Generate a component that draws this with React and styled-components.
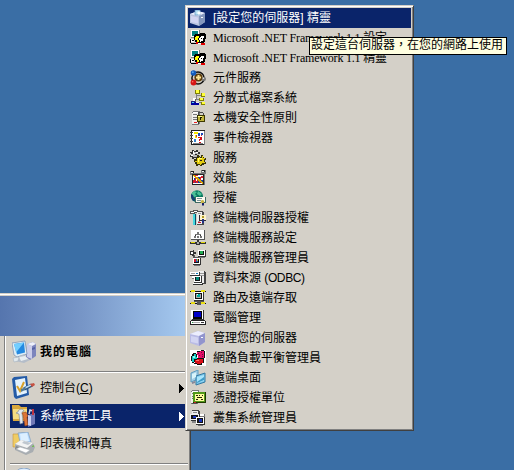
import React from "react";
import styled, { createGlobalStyle, css } from "styled-components";

const GlobalStyle = createGlobalStyle`
  * { box-sizing: border-box; }
  html, body { margin: 0; background: #3a6ea5; overflow: hidden; }
`;

const Desktop = styled.main`
  position: relative;
  width: 514px;
  height: 470px;
  overflow: hidden;
  background: #3a6ea5;
  color: #000;
  cursor: default;
  font: 12px/20px "Liberation Sans", "Noto Sans CJK TC", sans-serif;
`;

const StartMenu = styled.section`
  position: absolute;
  left: -4px;
  top: 293px;
  width: 195px;
  height: 190px;
  background: #d4d0c8;
  border: 1px solid #404040;
  border-top-color: #d4d0c8;
  box-shadow: inset -1px 0 #808080, inset 0 1px #fff;
`;

const UserBanner = styled.header`
  height: 40px;
  margin: 2px 2px 0 0;
  background: linear-gradient(90deg, #5474ad, #7796c7 45%, #a6caf0);
`;

const StartList = styled.div`
  margin-left: 7px;
  padding: 0 2px 0 5px;
  height: 146px;
  border-left: 1px solid #808080;
  box-shadow: inset 1px 0 #fff;
`;

const StartItem = styled.div`
  display: flex;
  align-items: center;
  height: ${(p) => p.$height || 28}px;
  padding: 0 4px 0 2px;
  ${(p) => p.$active && css`
    height: 24px;
    margin: 2px 0;
    background: #0a246a;
    color: #fff;
  `}
  svg { flex: none; }
`;

const StartLabel = styled.span`
  flex: 1;
  margin-left: 4px;
  white-space: pre;
  font-weight: ${(p) => (p.$bold ? 700 : 400)};
  letter-spacing: ${(p) => (p.$bold ? "1px" : "normal")};
`;

const Divider = styled.hr`
  height: 2px;
  margin: ${(p) => p.$margin};
  border: 0;
  border-top: 1px solid #808080;
  border-bottom: 1px solid #fff;
`;

const Popup = styled.nav`
  position: absolute;
  left: 185px;
  top: 5px;
  width: 229px;
  height: 426px;
  padding: 1px;
  background: #d4d0c8;
  border: 1px solid;
  border-color: #d4d0c8 #404040 #404040 #d4d0c8;
  box-shadow: inset 1px 1px #fff, inset -1px -1px #808080;
`;

const MenuItem = styled.div`
  display: flex;
  align-items: center;
  height: 20px;
  margin: 0 1px;
  padding-left: 2px;
  &:first-child { margin-top: 1px; }
  ${(p) => p.$active && css`
    background: #0a246a;
    color: #fff;
  `}
  svg { flex: none; }
`;

const MenuLabel = styled.span`
  margin-left: 7px;
  white-space: pre;
  ${(p) => p.$serif && css`
    font-family: "Liberation Serif", "Noto Sans CJK TC", serif;
    letter-spacing: -0.19px;
  `}
`;

const Latin = styled.span`
  letter-spacing: -0.4px;
`;

const Tooltip = styled.div`
  position: absolute;
  left: 309px;
  top: 37px;
  width: 198px;
  height: 18px;
  padding-left: 1px;
  border: 1px solid #000;
  background: #ffffe1;
  line-height: 15px;
  white-space: nowrap;
`;

const Glyph = ({ children }) => (
  <svg width="16" height="16" viewBox="0 0 16 16" shapeRendering="crispEdges">{children}</svg>
);

const ServerIcon = ({ wizard }) => (
  <svg width="16" height="16" viewBox="0 0 16 16">
    <path d="M0 4 8 1l7 2v9l-6 4-9-3Z" fill={wizard ? "#bac4df" : "#b9bbe5"} />
    <path d="M0 4 8 1l7 2-6 3Z" fill="#eceefe" />
    <path d="m9 6 6-3v9l-6 4Z" fill={wizard ? "#8497bd" : "#9295cd"} />
    <path d="M1 6 8 7.5v6L1 12Z" fill="#d2d4f2" />
    <path d="M11 7h2v1h-2Z" fill="#f8fbff" />
    {wizard && <path d="M5 0h5v5H5Z" fill="#b9e2f3" stroke="#679bc7" strokeWidth=".8" />}
    {wizard && <path d="m7 3 2-2 2 2-2 2Z" fill="#f9ffff" />}
  </svg>
);

const DotNetIcon = () => (
  <Glyph>
    <path d="M1 0h9v8H1Z" fill="#808080" />
    <path d="M1 0h8v7H1Z" fill="#fff" />
    <path d="M2 1h6v5H2Z" fill="#008080" />
    <path d="M5 4h5V3h5v1h1v5h-1v3h-1v1H7v-1H5v-2H4V5h1Z" fill="#000" />
    <path d="M6 6h3v2H8v2h1v2H7v-2H5V7h1Z" fill="#ffff00" />
    <path d="M10 7h1V6h3v3h-1v3h-3v-2H9V8h1Z" fill="#fff" />
    <path d="M11 8h1v1h-1Zm2 0h1v1h-1Zm-2 3h2v1h-2Z" fill="#000" />
    <path d="M1 9h3v3H1Z" fill="#fff" />
    <path d="M0 9h1v4h5v1H1v-1H0Zm2 1h2v1H2Z" fill="#000" />
    <path d="M6 12h2v2H6Zm5 1h4v2h-4Z" fill="#e00000" />
    <path d="M8 13h3v1H8Z" fill="#fff" />
  </Glyph>
);

const ComponentIcon = () => (
  <svg width="16" height="16" viewBox="0 0 16 16">
    <circle cx="8" cy="8" r="6.1" fill="none" stroke="#111" strokeWidth="1.5" />
    <circle cx="8.5" cy="7.5" r="4.1" fill="#60400d" />
    <path d="M7.5 5h2v1.5H11v2H9.5V10h-2V8.5H6v-2h1.5Z" fill="#ffe694" />
    <circle cx="3.5" cy="3" r="2.8" fill="#1359b8" /><circle cx="2.8" cy="2.2" r="1" fill="#55a5ef" />
    <circle cx="3.5" cy="12.5" r="2.9" fill="#d51416" /><circle cx="2.7" cy="11.7" r=".8" fill="#ff7769" />
    <circle cx="14" cy="9" r="2" fill="#777" /><circle cx="13.5" cy="8.3" r=".7" fill="#eee" />
  </svg>
);

const TreeIcon = () => (
  <Glyph>
    <path d="M6 3h1v7H6Zm1 2h4v1H7Zm0 4h3v1H7Zm2 3h3v1H9Z" fill="#808080" />
    <path d="M5 0h5v4H5Zm6 3h4v4h-4ZM9 8h5v3H9Zm2 4h4v3h-4Z" fill="#808000" />
    <path d="M6 0h3v3H6Zm6 3h3v3h-3Zm-2 5h3v2h-3Zm2 4h3v2h-3Z" fill="#ffff37" />
    <path d="M3 8h3v4H3Z" fill="#fff" /><path d="M5 9h1v3H5Z" fill="#606060" />
    <path d="M1 12h8v3H1Z" fill="#0000a0" /><path d="M1 11h4v2H1Z" fill="#202080" />
    <path d="M2 12h2v1H2Z" fill="#55cfff" /><path d="M6 12h3v1H6Z" fill="#eee" />
  </Glyph>
);

const Tower = ({ x = 0, y = 0 }) => (
  <g transform={`translate(${x} ${y})`}>
    <path d="M1 1 3 0h6v12l-2 2H1Z" fill="#777" /><path d="M1 2h6v11H1Z" fill="#f0f0ed" />
    <path d="M2 3h4v1H2Zm0 3h4v1H2Zm0 2h4v1H2Z" fill="#777" /><path d="M7 3h1v10H7Z" fill="#383838" />
    <path d="M2 1h6v1H2Z" fill="#fff" />
  </g>
);

const LockIcon = () => (
  <Glyph>
    <Tower x="1" y="1" /><path d="M8 2h5v1h1v4h-1V3H9v4H8Z" fill="#494949" />
    <path d="M7 5h8v7H7Z" fill="#3d3800" /><path d="M8 6h6v5H8Z" fill="#c2b63c" />
    <path d="M8 6h4v1H8Z" fill="#ffff8a" /><path d="M10 7h2v1h-1v2h-1Z" fill="#181500" />
    <path d="M4 12h3v1H4Z" fill="#e22" />
  </Glyph>
);

const BookIcon = () => (
  <Glyph>
    <path d="M1 0h14v15H1Z" fill="#222" /><path d="M2 1h12v13H2Z" fill="#fff" />
    <path d="M14 1h1v14h-1ZM3 13h10v1H3Z" fill="#808080" />
    <path d="M0 2h3v1H0Zm0 3h3v1H0Zm0 3h3v1H0Zm0 3h3v1H0Z" fill="#444" />
    <path d="M4 2h4v2H4Zm1 3h2v3H5Z" fill="#f5e800" /><path d="M8 3h2v3H8Zm3 0h2v2h-2Z" fill="#1648bd" />
    <path d="M8 7h4v3h-2v1H9V9h1V8H8Zm1 5h2v1H9Z" fill="#d2101b" />
    <path d="M4 9h2v3H4Z" fill="#3681ca" /><path d="M6 5h1v2H6Zm5 0h1v1h-1Z" fill="#c23140" />
  </Glyph>
);

const GearsIcon = () => (
  <Glyph>
    <path d="M2 0h2v1h2V0h2v2h2v2H9v2h1v1H8v2H6V8H4v1H2V7H0V5h1V3H0V2h2Z" fill="#333" />
    <path d="M3 2h5v2h1v1H8v2H3V6H1V4h2Z" fill="#bbb" />
    <path d="M3 1h1v2h1v1H3ZM1 5h2v1H1Zm5-3h2v1H6Z" fill="#fff" /><path d="M5 4h2v1H5Z" fill="#222" />
    <path d="M7 5h2v2h2V5h2v2h1v1h2v2h-1v2h1v2h-2v1h-2v1h-2v-1H8v1H6v-2H5v-2H4V9h2V8h1Z" fill="#38330a" />
    <path d="M7 8h2V7h1v1h2V6h1v2h2v1h-1v3h1v1h-3v1h-1v1h-1v-1H7v-2H5v-1h2Z" fill="#e4cc10" />
    <path d="M8 8h4v1H9v3H8Z" fill="#ffff72" /><path d="M10 10h2v1h-2Z" fill="#222" />
  </Glyph>
);

const PerformanceIcon = () => (
  <Glyph>
    <path d="M0 1h4v2h7V0h5v4h-1v11H2V5H0Z" fill="#777" />
    <path d="M1 1h3v2H1Zm11-1h3v2h-3ZM2 4h12v11H2Z" fill="#222" />
    <path d="M3 5h10v9H3Z" fill="#fff" /><path d="M1 2h2v1H1Zm11-1h2v1h-2Z" fill="#eee" />
    <path d="M4 8h2v5H4Zm4-1h2v6H8Zm3 3h2v3h-2Z" fill="#173d9b" />
    <path d="M3 10h2V7h1v4h1V9h1v4H6v-1H5v1H3Zm7-3h1v6h-1Z" fill="#d51d2b" />
    <path d="m3 5 10 9M4 5l9 8" stroke="#d7a500" />
    <path d="M5 5h3v1H5Zm6 1h2v2h-2Z" fill="#d52432" />
  </Glyph>
);

const CertificateIcon = () => (
  <svg width="16" height="16" viewBox="0 0 16 16">
    <circle cx="7" cy="6.2" r="6" fill="#08785e" />
    <path d="M1 4 4 1l3 1-2 2 2 2-3 1-2-1Zm7-3 4 3-2 2-3-2Z" fill="#4bc096" />
    <path d="m1 4 2 1 1 3 2 2-3 1-2-4Z" fill="#173d74" />
    <path d="M5 7h11v6H5Z" fill="#416b64" /><path d="M6 7h9v5H6Z" fill="#fffaf0" />
    <path d="M7 8h5v1H7Zm0 2h4v1H7Z" fill="#7c9699" />
    <circle cx="12.5" cy="11.7" r="1.8" fill="#c7b347" /><path d="M12 13h2v3l-1-1-1 1Z" fill="#18206a" />
  </svg>
);

const MiniScreen = ({ x = 0, y = 0, color = "#087" }) => (
  <g transform={`translate(${x} ${y})`}>
    <path d="M0 0h8v7H0Z" fill="#333" /><path d="M0 0h7v6H0Z" fill="#fff" />
    <path d="M1 1h5v4H1Z" fill="#111" /><path d="M2 1h3v3H2Z" fill={color} />
    <path d="M1 7h6v1H1Z" fill="#777" />
  </g>
);

const TerminalLicenseIcon = () => (
  <Glyph>
    <path d="M0 1h3V0h5v3H5v1H0Z" fill="#555" /><path d="M1 2h3V1h3v1H4v1H1Z" fill="#fff" />
    <path d="M3 4h3v11H3Z" fill="#064f69" /><path d="M3 4h2v11H3Z" fill="#45d7df" />
    <path d="M7 1h6v1h1v13H7Z" fill="#4a4a4a" /><path d="M7 2h5v12H7Z" fill="#eee" />
    <path d="M8 3h3v1H8Zm0 8h2v1H8Z" fill="#999" />
    <path d="M9 5h7v6H9Z" fill="#302a32" /><path d="M10 5h6v5h-6Z" fill="#fff5ca" />
    <path d="M12 6h2v2h-2Z" fill="#b19d29" /><path d="M8 12h3v1H8Z" fill="#cf1734" />
    <path d="M12 9h2v4h-2Z" fill="#223184" />
  </Glyph>
);

const TerminalConfigIcon = () => (
  <Glyph>
    <path d="M1 0h14v10H1Z" fill="#555" /><path d="M1 0h13v9H1Z" fill="#fff" />
    <path d="M7 2h2v2H7ZM5 4h6v1H5ZM4 6h2v2H4Zm3 0h2v2H7Zm3 0h2v2h-2Z" fill="#777" />
    <path d="M5 5h1v1H5Zm5 0h1v1h-1ZM7 10h2v2h7v2h-6v1H6v-1H0v-2h7Z" fill="#333" />
    <path d="M1 12h4v1H1Zm10 0h4v1h-4Z" fill="#e2d700" /><path d="M7 12h2v2H7Z" fill="#aaa" />
  </Glyph>
);

const TerminalManagerIcon = () => (
  <Glyph>
    <path d="M3 5h2v3H3Zm2 2h7v1H5Zm2 1h1v1H7Z" fill="#555" />
    <MiniScreen x="8" y="0" color="#20aa50" /><MiniScreen x="3" y="8" color="#235dc2" />
    <path d="M0 1h3V0h1v2h2v2H4v2H2V5H0Z" fill="#333" /><path d="M1 2h2v2H1Z" fill="#fff" />
    <path d="M4 9h2v3H4Z" fill="#ca1b2c" /><path d="M7 9h1v2H7Z" fill="#d5cb1b" />
  </Glyph>
);

const DatabaseIcon = () => (
  <Glyph>
    <path d="M9 1h6v1h1v12H9Z" fill="#444" /><path d="M8 1h6v12H8Z" fill="#eee" />
    <path d="M10 3h4v1h-4Zm0 2h4v1h-4Z" fill="#999" />
    <path d="M0 2h10v4H0Z" fill="#333" /><path d="M0 2h9v3H0Z" fill="#fff" />
    <path d="M1 3h4v1H1Z" fill="#9a9a9a" /><path d="M6 3h2v1H6Z" fill="#127aba" />
    <path d="M2 6h4v3H2Z" fill="#777" /><path d="M2 6h3v2H2Z" fill="#fff" />
    <MiniScreen x="4" y="6" /><path d="M3 13h10v2H3Z" fill="#333" />
    <path d="M3 13h9v1H3Z" fill="#fff" />
  </Glyph>
);

const NetworkIcon = () => (
  <Glyph>
    <path d="M0 1h16v1H0Zm0 12h16v1H0Z" fill="#111" />
    <path d="M1 0h4v2H1Zm10 0h4v2h-4ZM1 12h4v2H1Zm10 0h4v2h-4Z" fill="#eade12" />
    <path d="M4 2h10v9H4Z" fill="#333" /><path d="M4 2h9v8H4Z" fill="#fff" />
    <path d="M5 3h7v6H5Z" fill="#111" /><path d="M6 4h5v4H6Z" fill="#aaa" />
    <path d="M7 4h3v3H7Z" fill="#00a6a0" /><path d="M7 4h1v1H7Z" fill="#e1ffff" />
    <path d="M4 11h10v1H4Zm3 1h4v3H7Z" fill="#555" />
  </Glyph>
);

const ComputerIcon = () => (
  <Glyph>
    <path d="M2 0h12v10H2Z" fill="#333" /><path d="M1 0h12v9H1Z" fill="#fff" />
    <path d="M3 1h9v8H3Z" fill="#060606" /><path d="M4 2h7v5H4Z" fill="#0000c8" />
    <path d="M1 10h14v1h1v4H0v-4h1Z" fill="#222" /><path d="M1 11h14v3H1Z" fill="#fff" />
    <path d="M2 12h8v1H2Z" fill="#aaa" /><path d="M11 12h3v1h-3Z" fill="#333" />
    <path d="M2 12h1v1H2Z" fill="#28a547" />
  </Glyph>
);

const BalanceIcon = () => (
  <Glyph>
    <path d="M0 0h16v16H0Z" fill="#fff" />
    <path d="M3 3h3v1h1V1h4V0h3v1h1v7h-1v5h-2v2H7v-1H4v-1H2v-2H1V6h1V4h1Z" fill="#111" />
    <path d="M4 4h2v3h1v2H4v3H2V6h2Z" fill="#13c9c5" /><path d="M3 6h2v2H3Z" fill="#87fff4" />
    <path d="M7 2h3V1h4v7H8V5H7Z" fill="#e60d68" />
    <path d="M8 3h1v1H8Zm3-1h1v1h-1Zm1 2h1v1h-1ZM9 5h1v1H9Zm3 1h1v1h-1Z" fill="#68113d" />
    <path d="M5 10h2V9h6v4h-2v1H7v-1H5Z" fill="#dd1018" /><path d="M6 10h3v1H6Z" fill="#ff756b" />
    <path d="M4 12h1v1H4Zm3-7h1v3H7Z" fill="#fff" />
  </Glyph>
);

const RemoteDesktopIcon = () => (
  <svg width="16" height="16" viewBox="0 0 16 16">
    <path d="m1 3 7-3v9l-7 3Z" fill="#a6cfe7" stroke="#5b9cc0" />
    <path d="m6 6 9-3v9l-9 3Z" fill="#79c4e9" stroke="#347aa2" />
    <path d="m7 7 7-2v6l-7 2Z" fill="#a9e5fc" /><path d="m7 12 7-5v3l-7 3Z" fill="#3f9bc8" />
    <path d="m2 4 4-1.5V7L2 9Z" fill="#d8f4fb" /><path d="m2 12 3-1v2l-3 1Z" fill="#889" />
  </svg>
);

const AuthorityIcon = () => (
  <Glyph>
    <Tower /><path d="M3 2h13v11H3Z" fill="#203900" /><path d="M3 2h12v10H3Z" fill="#519919" />
    <path d="M5 4h9v7H5Z" fill="#fffda0" />
    <path d="M6 5h2v1H6Zm3 0h1v1H9Zm3 0h1v1h-1ZM7 7h5v1H7ZM6 9h2v1H6Zm5 0h2v1h-2Z" fill="#26250c" />
    <path d="M2 13h5v1H2Z" fill="#555" /><path d="M4 12h2v1H4Z" fill="#c32323" />
  </Glyph>
);

const ClusterIcon = () => (
  <Glyph>
    <path d="M2 0h7v1h1v6H2Z" fill="#444" /><path d="M2 1h6v5H2Z" fill="#eee" />
    <path d="M3 2h4v1H3Z" fill="#888" /><path d="M1 4h9v7H1Z" fill="#333" />
    <path d="M0 4h9v6H0Z" fill="#eee" /><path d="M1 5h7v4H1Z" fill="#111" />
    <path d="M3 6h3v2H3Z" fill="#1734bd" /><path d="M2 11h6v2H2Z" fill="#888" />
    <path d="M10 4h5v11h-5Z" fill="#777" /><path d="M10 4h4v2h-4Z" fill="#fff" />
    <path d="M6 7h9v8H6Z" fill="#333" /><path d="M6 7h8v7H6Z" fill="#fff" />
    <path d="M7 8h6v5H7Z" fill="#111" /><path d="M9 9h3v3H9Z" fill="#1734bd" />
    <path d="M8 15h5v1H8Z" fill="#777" />
  </Glyph>
);

const Picture = ({ children }) => <svg width="24" height="24" viewBox="0 0 24 24">{children}</svg>;

const MyComputerIcon = () => (
  <Picture>
    <path d="m15 4 6-2 3 2v12l-6 4-4-3Z" fill="#7d85bd" /><path d="m15 4 5 2v13l-5-2Z" fill="#cbcde9" />
    <path d="m15 4 6-2 3 2-4 2Z" fill="#eef0fa" /><path d="m20 8 3-1v2l-3 1Z" fill="#5561a5" />
    <path d="m0 3 13-2 2 13-10 3-3-2Z" fill="#dfeef7" stroke="#768dad" strokeWidth=".7" />
    <path d="m2 4 10-1.5 1 10-8 2Z" fill="#2489e0" /><path d="m2 4 10-1.5-8 10Z" fill="#72ceff" />
    <path d="m7 16 6-2v4l5 2-6 3-9-2 4-2Z" fill="#b4bdc9" /><path d="m7 17 6-1 3 3-7 2Z" fill="#e8eef2" />
    <path d="m1 18 6-1-1 4-4 1Z" fill="#e2e9ed" stroke="#9babba" strokeWidth=".5" />
  </Picture>
);

const ControlPanelIcon = () => (
  <Picture>
    <path d="m0 3 2-2 13-1 2 19-13 4-2-2Z" fill="#245ba7" /><path d="m3 4 10-2 2 15-10 3Z" fill="#e4f3fe" />
    <path d="m5 10 3 5 4-9" fill="none" stroke="#d8a12b" strokeWidth="2" />
    <path d="m12 13 8-4" stroke="#31557c" strokeWidth="3.5" /><path d="m13 12 6-3" stroke="#bcddf4" strokeWidth="1.4" />
    <path d="m18 8 4-1 1 2-3 2Z" fill="#c65242" /><path d="m9 13 5-2-1 3-4 2Z" fill="#547b95" />
  </Picture>
);

const ToolsIcon = () => (
  <Picture>
    <path d="M0 3V1h7l2 2h6v14H1Z" fill="#d9a83e" /><path d="M1 5h14v10H1Z" fill="#f5dc82" />
    <path d="M6 8c0-3 5-4 6-1l-2 1 1 11-3 1-1-10-3-1Z" fill="#e2e9ef" stroke="#778293" strokeWidth=".6" />
    <path d="m10 9 4-1 2 4-1 1 1 8-3 1-2-11Z" fill="#de7537" stroke="#93431c" strokeWidth=".6" />
    <path d="m17 10 1-4 3 1v3" fill="none" stroke="#ced6e6" strokeWidth="1.5" />
    <path d="m16 11 7-2v11l-7 3Z" fill="#7079b7" /><path d="m16 11 3 1v10l-3-1Z" fill="#cbd1f2" />
    <path d="M20 5h2v6h-2Z" fill="#bf3340" />
  </Picture>
);

const PrinterIcon = () => (
  <Picture>
    <path d="M1 2h6l2 3v10H1Z" fill="#efcc64" stroke="#c4953f" strokeWidth=".6" />
    <path d="m6 1 10-1 3 10H8Z" fill="#b6daff" stroke="#7293b6" strokeWidth=".6" />
    <path d="m8 2 7-1 2 8H9Z" fill="#dcefff" /><path d="m3 12 6-4 12 3 2 4-2 5-7 3-11-5Z" fill="#a8adb1" />
    <path d="m3 12 6-4 12 3-6 5Z" fill="#f3f4f4" /><path d="m4 14 11 4v3L3 17Z" fill="#858a8e" />
    <path d="m4 17 4-2 10 3-4 3Z" fill="#fff" stroke="#a7afb7" strokeWidth=".5" />
    <path d="m10 11 2-2 7 2-3 2Z" fill="#bfc7cf" /><path d="m20 14 2-1v2h-2Z" fill="#74bb58" />
  </Picture>
);

const HelpIcon = () => <Picture><circle cx="12" cy="11" r="11" fill="#dcecff" stroke="#8ca6c5" /></Picture>;

const SubmenuArrow = () => (
  <svg width="5" height="9" viewBox="0 0 5 9" shapeRendering="crispEdges">
    <path d="m0 0 4.5 4.5L0 9Z" fill="currentColor" />
  </svg>
);

const programs = [
  ["[設定您的伺服器] 精靈", () => <ServerIcon wizard />],
  ["Microsoft .NET Framework 1.1 設定", DotNetIcon, true],
  ["Microsoft .NET Framework 1.1 精靈", DotNetIcon, true],
  ["元件服務", ComponentIcon], ["分散式檔案系統", TreeIcon],
  ["本機安全性原則", LockIcon], ["事件檢視器", BookIcon],
  ["服務", GearsIcon], ["效能", PerformanceIcon], ["授權", CertificateIcon],
  ["終端機伺服器授權", TerminalLicenseIcon], ["終端機服務設定", TerminalConfigIcon],
  ["終端機服務管理員", TerminalManagerIcon],
  [<React.Fragment key="odbc">資料來源 <Latin>(ODBC)</Latin></React.Fragment>, DatabaseIcon],
  ["路由及遠端存取", NetworkIcon], ["電腦管理", ComputerIcon],
  ["管理您的伺服器", ServerIcon], ["網路負載平衡管理員", BalanceIcon],
  ["遠端桌面", RemoteDesktopIcon], ["憑證授權單位", AuthorityIcon],
  ["叢集系統管理員", ClusterIcon],
];

export default function App() {
  return (
    <>
      <GlobalStyle />
      <Desktop>
        <StartMenu>
          <UserBanner />
          <StartList>
            <StartItem $height={32}><MyComputerIcon /><StartLabel $bold>我的電腦</StartLabel></StartItem>
            <Divider $margin="3px 0 1px" />
            <StartItem><ControlPanelIcon /><StartLabel>控制台(<u>C</u>)</StartLabel><SubmenuArrow /></StartItem>
            <StartItem $active><ToolsIcon /><StartLabel>系統管理工具</StartLabel><SubmenuArrow /></StartItem>
            <StartItem><PrinterIcon /><StartLabel>印表機和傳真</StartLabel></StartItem>
            <Divider $margin="5px 0 1px" />
            <StartItem><HelpIcon /></StartItem>
          </StartList>
        </StartMenu>
        <Popup>
          {programs.map(([label, Icon, serif], index) => (
            <MenuItem key={index} $active={index === 0}>
              <Icon /><MenuLabel $serif={serif}>{label}</MenuLabel>
            </MenuItem>
          ))}
        </Popup>
        <Tooltip>設定這台伺服器，在您的網路上使用</Tooltip>
      </Desktop>
    </>
  );
}
